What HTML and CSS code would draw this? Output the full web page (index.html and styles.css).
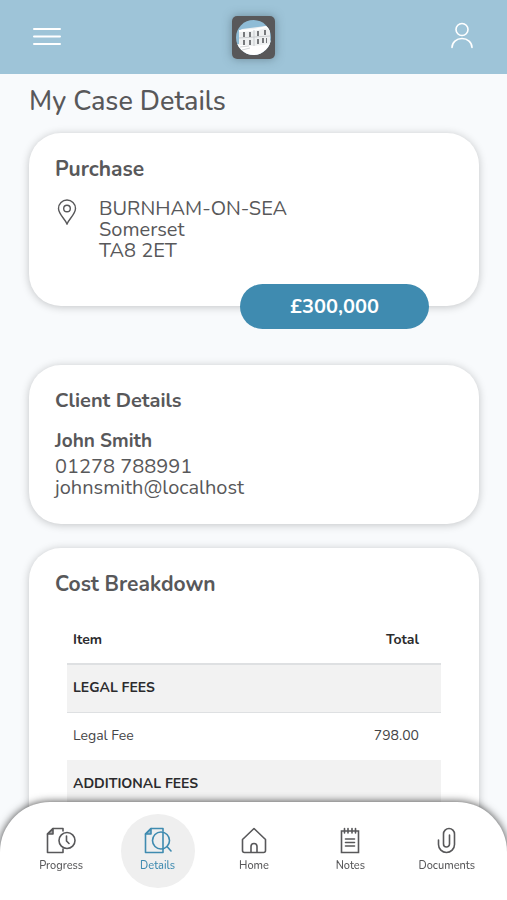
FILE: index.html
```html
<!DOCTYPE html>
<html lang="en">
<head>
<meta charset="utf-8">
<meta name="viewport" content="width=device-width, initial-scale=1">
<title>My Case Details</title>
<link rel="stylesheet" href="styles.css">
</head>
<body>
<header class="topbar">
  <button class="icon-button" type="button" aria-label="Menu">
    <svg width="28" height="20" viewBox="0 0 28 20" fill="none" stroke="#fff" stroke-width="2" stroke-linecap="round"><path d="M1 2h26M1 9.500h26M1 17h26"/></svg>
  </button>
  <a class="logo" href="#" aria-label="Home">
    <svg width="43" height="43" viewBox="0 0 43 43">
      <defs><clipPath id="disc"><circle cx="21.500" cy="21.500" r="17.500"/></clipPath></defs>
      <rect width="43" height="43" rx="5" fill="#58585a"/>
      <g clip-path="url(#disc)">
        <rect width="43" height="43" fill="#8fbcd6"/>
        <path d="M0 29L43 24V43H0z" fill="#fff"/>
        <path d="M7 15L10 13L34 10L38 14V28L22 30L7 29z" fill="#eef0f1"/>
        <path d="M7 15L22 14L34 11L38 14" fill="none" stroke="#fff" stroke-width="2"/>
        <path d="M22 14V30M7 22L38 20" stroke="#c9cccf" stroke-width="1"/>
        <g fill="#77797c"><path d="M11 16h2v5h-2zM17 16h2v5h-2zM25 15h2v5h-2zM32 14h2v5h-2zM11 24h2v5h-2zM17 24h2v5h-2zM25 23h2v5h-2zM30 22h2v5h-2zM34 22h1v5h-1z"/></g>
        <path d="M8 31l9-1M10 34l8-2" stroke="#d2d5d7"/>
      </g>
    </svg>
  </a>
  <button class="icon-button account" type="button" aria-label="Account">
    <svg width="24" height="27" viewBox="0 0 24 27" fill="none" stroke="#fff" stroke-width="1.600" stroke-linecap="round"><circle cx="12" cy="7.500" r="6"/><path d="M2 25.500a10 9 0 0 1 20 0"/></svg>
  </button>
</header>

<main class="content">
  <h1>My Case Details</h1>

  <section class="card purchase">
    <h2>Purchase</h2>
    <div class="address">
      <svg width="20" height="26" viewBox="0 0 20 26" fill="none" stroke="#58585a" stroke-width="1.400"><path d="M10 25C8 20 1.500 15 1.500 9.500a8.500 8.500 0 0 1 17 0C18.500 15 12 20 10 25z"/><circle cx="10" cy="9.500" r="3.300"/></svg>
      <address>BURNHAM-ON-SEA<br>Somerset<br>TA8 2ET</address>
    </div>
    <strong class="price">£300,000</strong>
  </section>

  <section class="card client">
    <h2>Client Details</h2>
    <h3>John Smith</h3>
    <p>01278 788991<br>johnsmith@localhost</p>
  </section>

  <section class="card costs">
    <h2>Cost Breakdown</h2>
    <table>
      <thead><tr><th scope="col">Item</th><th scope="col" class="amount">Total</th></tr></thead>
      <tbody>
        <tr class="group"><th colspan="2" scope="rowgroup">LEGAL FEES</th></tr>
        <tr><td>Legal Fee</td><td class="amount">798.00</td></tr>
        <tr class="group"><th colspan="2" scope="rowgroup">ADDITIONAL FEES</th></tr>
      </tbody>
    </table>
  </section>
</main>

<nav class="tabs">
  <a href="#">
    <svg width="30" height="27" viewBox="0 0 30 27" fill="none" stroke="currentColor" stroke-width="1.600" stroke-linecap="round" stroke-linejoin="round"><path d="M17 4V1.500H7L1.500 7V25.500H17V22"/><path d="M7 1.500V7H1.500z" fill="currentColor" fill-opacity="0.500"/><circle cx="21" cy="13.500" r="8"/><path d="M20.500 9V14L23 16.500"/></svg>
    <span>Progress</span>
  </a>
  <a href="#" class="active" aria-current="page">
    <svg width="28" height="27" viewBox="0 0 28 27" fill="none" stroke="currentColor" stroke-width="1.600" stroke-linecap="round" stroke-linejoin="round"><path d="M19 4V1.500H7L1.500 7V25.500H19V22"/><path d="M7 1.500V7H1.500z" fill="currentColor" fill-opacity="0.500"/><circle cx="17" cy="13.500" r="8.500"/><path d="M19 5V22M23 19.500L27 24"/></svg>
    <span>Details</span>
  </a>
  <a href="#">
    <svg width="26" height="27" viewBox="0 0 26 27" fill="none" stroke="currentColor" stroke-width="1.600" stroke-linejoin="round"><path d="M13 1.500L24.500 12.500V23.500a2 2 0 0 1-2 2H3.500a2 2 0 0 1-2-2V12.500z"/><path d="M10 25.500V19.500a3 3 0 0 1 6 0V25.500"/></svg>
    <span>Home</span>
  </a>
  <a href="#">
    <svg width="20" height="27" viewBox="0 0 20 27" fill="none" stroke="currentColor" stroke-width="1.600" stroke-linecap="round"><path d="M1.500 4H18.500V25.500H1.500zM4.500 1.500V6M8 1.500V6M12 1.500V6M15.500 1.500V6M5.500 12H14.500M5.500 15.500H14.500M5.500 19H14.500"/></svg>
    <span>Notes</span>
  </a>
  <a href="#">
    <svg width="20" height="27" viewBox="0 0 20 27" fill="none" stroke="currentColor" stroke-width="1.600" stroke-linecap="round"><path d="M1.500 13V17.500a8 8 0 0 0 16 0V7a5.500 5.500 0 0 0-11 0V17a3 3 0 0 0 6 0V8"/></svg>
    <span>Documents</span>
  </a>
</nav>
</body>
</html>
```

FILE: styles.css
```css
* { box-sizing: border-box; }

body {
  margin: 0;
  height: 100vh;
  display: flex;
  flex-direction: column;
  background: #f8fafc;
  color: #58585a;
  font-family: Nunito, "Open Sans", "Noto Sans", sans-serif;
}

h1, h2, h3, p { margin: 0; }
svg { display: block; flex: none; }

.topbar {
  flex: none;
  display: grid;
  grid-template-columns: 1fr auto 1fr;
  align-items: center;
  height: 74px;
  padding: 0 33px;
  background: #9ec4d8;
}

.icon-button {
  justify-self: start;
  padding: 0;
  border: 0;
  background: none;
}

.account { justify-self: end; padding-bottom: 4px; }

.logo {
  border-radius: 5px;
  box-shadow: 0 0 10px rgba(60, 80, 90, 0.5);
}

.content {
  flex: 1;
  min-height: 0;
  overflow-y: auto;
  scrollbar-width: none;
  padding: 10px 28px 120px 29px;
}

h1 {
  margin-bottom: 13px;
  font-size: 27px;
  line-height: 36px;
  font-weight: 500;
}

.card {
  position: relative;
  padding: 22px 26px;
  border-radius: 32px;
  background: #fff;
  box-shadow: 0 1px 8px rgba(0, 0, 0, 0.22);
}

h2 {
  font-size: 21px;
  line-height: 28px;
  font-weight: 700;
}

.purchase { padding-bottom: 45px; margin-bottom: 59px; }

.address {
  display: flex;
  gap: 22px;
  margin-top: 15px;
  padding-left: 2px;
}

.address svg { margin-top: 1px; }

address, .client p {
  font-style: normal;
  font-size: 20px;
  line-height: 21px;
  font-weight: 400;
}

.price {
  position: absolute;
  right: 50px;
  bottom: -23px;
  width: 42%;
  border-radius: 24px;
  background: #3f8bb0;
  color: #fff;
  font-size: 20px;
  line-height: 45px;
  font-weight: 700;
  text-align: center;
}

.client { padding-bottom: 26px; margin-bottom: 24px; }
.client h2 { font-size: 20px; }

h3 {
  margin-top: 12px;
  font-size: 19px;
  line-height: 29px;
  font-weight: 700;
}

.costs { padding-bottom: 40px; }

table {
  width: calc(100% - 24px);
  margin: 18px 12px 0;
  border-collapse: collapse;
  font-size: 14px;
  line-height: 20px;
}

th, td {
  height: 48px;
  padding: 0 6px;
  text-align: left;
}

th { color: #2b2b2d; font-weight: 700; }
td { color: #444446; }
thead th { border-bottom: 2px solid #dee0e2; }
.group { background: #f2f2f2; }
.group:first-child { border-bottom: 1px solid #dee0e2; }
.amount { padding-right: 22px; text-align: right; }

.tabs {
  position: fixed;
  right: 0;
  bottom: 0;
  left: 0;
  display: grid;
  grid-template-columns: repeat(5, 1fr);
  justify-items: center;
  padding: 12px 12px 12px 13px;
  border-radius: 50px 50px 0 0;
  background: #fff;
  box-shadow: 0 0 8px rgba(0, 0, 0, 0.75);
}

.tabs a {
  display: flex;
  flex-direction: column;
  align-items: center;
  gap: 4px;
  width: 74px;
  height: 74px;
  padding-top: 13px;
  border-radius: 50%;
  color: #58585a;
  font-size: 11px;
  line-height: 16px;
  font-weight: 500;
  text-decoration: none;
}

.tabs .active { background: #efefef; color: #3f8bb0; }
```
